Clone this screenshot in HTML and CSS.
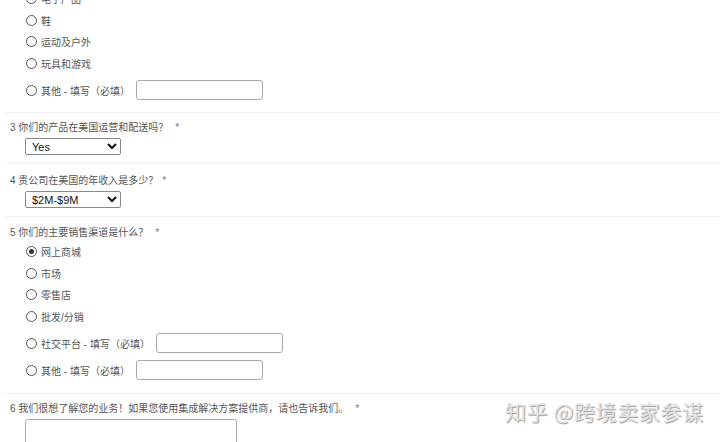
FILE: index.html
```html
<!DOCTYPE html>
<html lang="zh-CN">
<head>
    <meta charset="UTF-8">
    <meta content="width=device-width, initial-scale=1.0" name="viewport">
    <title>问卷</title>
    <link rel="stylesheet" href="styles.css">
</head>
<body>

<div class="form">
    <div class="question first">
        <div class="options">
            <label class="option"><input type="radio" name="q2">电子产品</label>
            <label class="option"><input type="radio" name="q2">鞋</label>
            <label class="option"><input type="radio" name="q2">运动及户外</label>
            <label class="option"><input type="radio" name="q2">玩具和游戏</label>
            <label class="option other"><input type="radio" name="q2">其他 - 填写（必填）<input class="text-input" type="text"></label>
        </div>
    </div>

    <div class="question q3">
        <div class="question-title">3 你们的产品在美国运营和配送吗？ <span class="req">*</span></div>
        <select class="dropdown">
            <option>Yes</option>
            <option>No</option>
        </select>
    </div>

    <div class="question q4">
        <div class="question-title">4 贵公司在美国的年收入是多少？<span class="req">*</span></div>
        <select class="dropdown">
            <option>$2M-$9M</option>
            <option>$10M+</option>
        </select>
    </div>

    <div class="question q5">
        <div class="question-title">5 你们的主要销售渠道是什么？ <span class="req">*</span></div>
        <div class="options">
            <label class="option"><input type="radio" name="q5" checked>网上商城</label>
            <label class="option"><input type="radio" name="q5">市场</label>
            <label class="option"><input type="radio" name="q5">零售店</label>
            <label class="option"><input type="radio" name="q5">批发/分销</label>
            <label class="option other"><input type="radio" name="q5">社交平台 - 填写（必填）<input class="text-input" type="text"></label>
            <label class="option other"><input type="radio" name="q5">其他 - 填写（必填）<input class="text-input" type="text"></label>
        </div>
    </div>

    <div class="question q6">
        <div class="question-title">6 我们很想了解您的业务！如果您使用集成解决方案提供商，请也告诉我们。 <span class="req">*</span></div>
        <textarea class="text-area"></textarea>
    </div>
</div>

<div class="watermark">知乎 @跨境卖家参谋</div>

</body>
</html>
```

FILE: styles.css
```css
body {
    font-family: "Liberation Sans", "Noto Sans CJK SC", sans-serif;
    margin: 0;
    background: #ffffff;
    color: #4a4a4a;
    font-size: 10px;
    overflow: hidden;
    height: 442px;
}

.form {
    margin-top: -12px;
    margin-left: 5px;
}

.question {
    border-top: 1px solid #efefef;
    padding-left: 5px;
}

.question.first {
    border-top: none;
    padding-bottom: 11px;
}

.q3 {
    padding-top: 8px;
    padding-bottom: 8px;
}

.q4 {
    padding-top: 10px;
    padding-bottom: 8px;
}

.q5 {
    padding-top: 9px;
    padding-bottom: 12px;
}

.q6 {
    padding-top: 8px;
}

.question-title {
    line-height: 14px;
    color: #555;
}

.req {
    color: #777;
    margin-left: 4px;
}

.options {
    display: flex;
    flex-direction: column;
    padding-left: 16px;
}

.q5 .options {
    margin-top: 1px;
}

.option {
    display: flex;
    align-items: center;
    height: 21.5px;
    color: #555;
    white-space: nowrap;
}

.option.other {
    height: 22px;
    padding-top: 5px;
}

input[type="radio"] {
    -webkit-appearance: none;
    appearance: none;
    width: 11px;
    height: 11px;
    margin: 0 4px 0 0;
    border: 1.3px solid #555;
    border-radius: 50%;
    background: #fff;
    display: flex;
    align-items: center;
    justify-content: center;
}

input[type="radio"]:checked::after {
    content: "";
    width: 5px;
    height: 5px;
    border-radius: 50%;
    background: #333;
}

.text-input {
    width: 127px;
    height: 20px;
    box-sizing: border-box;
    margin-left: 6px;
    border: 1px solid #aaa;
    border-radius: 3px;
}

.dropdown {
    display: block;
    width: 96px;
    height: 17px;
    margin: 3px 0 0 15px;
    font-family: "Liberation Sans", sans-serif;
    font-size: 11px;
    color: #111;
    border: 1px solid #888;
    border-radius: 2px;
    background: #fff;
    padding: 0 2px;
}

.text-area {
    display: block;
    width: 212px;
    height: 40px;
    box-sizing: border-box;
    margin: 3px 0 0 15px;
    border: 1px solid #aaa;
    border-radius: 3px;
    resize: none;
}

.watermark {
    position: absolute;
    left: 505px;
    top: 396px;
    font-family: "Noto Sans CJK SC", sans-serif;
    font-size: 21px;
    letter-spacing: 0.6px;
    color: #e2e2e2;
    text-shadow: 1px 1px 1px #9a9a9a;
}
```
